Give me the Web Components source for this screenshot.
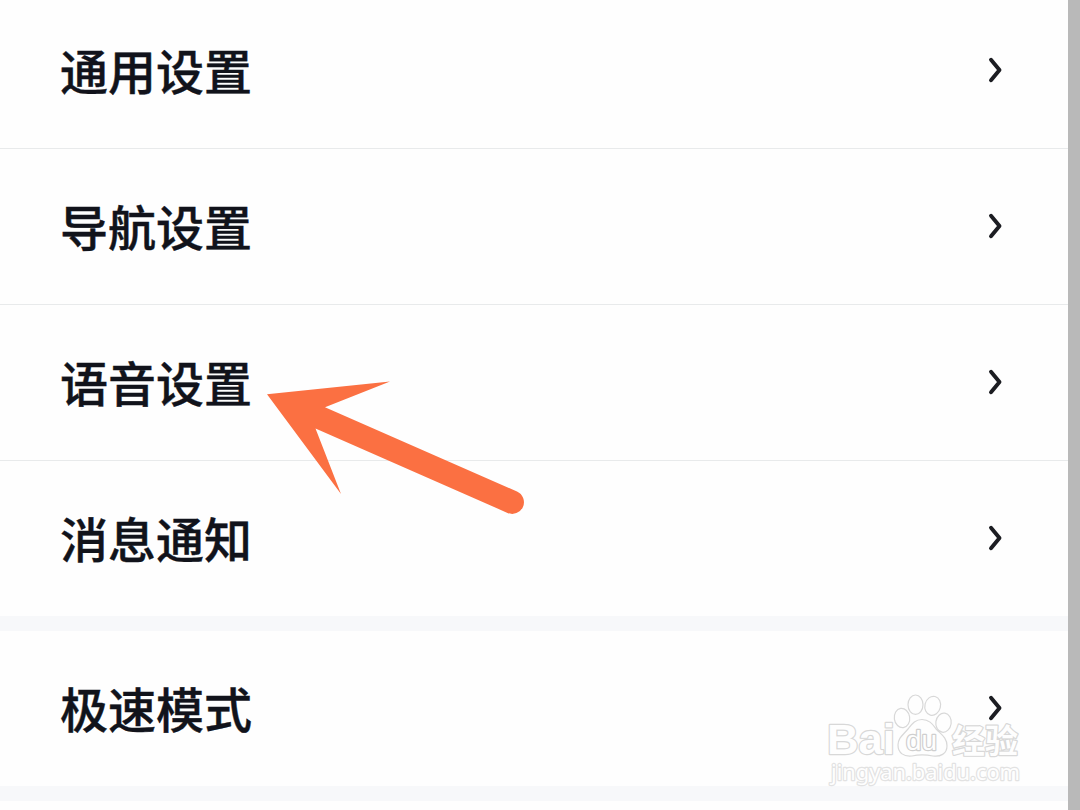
<!DOCTYPE html>
<html lang="zh-CN">
<head>
<meta charset="utf-8">
<title>设置</title>
<style>
  html, body {
    margin: 0;
    height: 100%;
    overflow: hidden;
    background: #fefefe;
  }
</style>
</head>
<body>
<settings-page>
  <settings-group>
    <settings-row>通用设置</settings-row>
    <settings-row>导航设置</settings-row>
    <settings-row>语音设置</settings-row>
    <settings-row>消息通知</settings-row>
  </settings-group>
  <settings-group>
    <settings-row>极速模式</settings-row>
  </settings-group>
  <pointer-arrow slot="overlay"></pointer-arrow>
  <site-watermark slot="overlay"></site-watermark>
</settings-page>

<script>
class SettingsPage extends HTMLElement {
  constructor() {
    super();
    this.attachShadow({ mode: "open" });
    this.render();
  }

  render() {
    this.shadowRoot.innerHTML = `
      <style>
      :host {
        position: relative;
        display: flex;
        width: 1080px;
        height: 810px;
        overflow: hidden;
        background: #fefefe;
        color: #11131b;
        font-family: "Noto Sans CJK SC", "Noto Sans", sans-serif;
      }
      main {
        flex: 1;
        min-width: 0;
        margin-top: -7px;
      }
      .edge {
        flex: none;
        width: 12px;
        background: #b9b9b9;
      }
      </style>
      <main><slot></slot></main>
      <div class="edge"></div>
      <slot name="overlay"></slot>
    `;
  }
}

class SettingsGroup extends HTMLElement {
  constructor() {
    super();
    this.attachShadow({ mode: "open" });
    this.render();
  }

  render() {
    this.shadowRoot.innerHTML = `
      <style>
      :host {
        display: block;
        border-bottom: 15px solid #f7f8fa;
      }
      ::slotted(settings-row:not(:last-child)) {
        border-bottom: 1px solid #e8eaeb;
      }
      </style>
      <slot></slot>
    `;
  }
}

class SettingsRow extends HTMLElement {
  constructor() {
    super();
    this.attachShadow({ mode: "open" });
    this.render();
  }

  render() {
    this.shadowRoot.innerHTML = `
      <style>
      :host {
        display: flex;
        align-items: center;
        justify-content: space-between;
        height: 155px;
        padding: 0 65px 0 60px;
        box-sizing: content-box;
      }
      .label {
        font-size: 48px;
        font-weight: 500;
        line-height: 70px;
        padding-bottom: 4px;
        -webkit-text-stroke: 0.4px currentColor;
      }
      svg {
        display: block;
        width: 16px;
        height: 28px;
        margin-bottom: 1px;
      }
      </style>
      <span class="label"><slot></slot></span>
      <svg viewBox="0 0 16 28" fill="none" stroke="#1c1d22" stroke-width="3.9" stroke-linecap="round" stroke-linejoin="round">
        <path d="M4 3.7 L12.5 14 L4 24.3"/>
      </svg>
    `;
  }
}

class PointerArrow extends HTMLElement {
  constructor() {
    super();
    this.attachShadow({ mode: "open" });
    this.render();
  }

  render() {
    this.shadowRoot.innerHTML = `
      <style>
      :host {
        position: absolute;
        left: 260px;
        top: 374px;
      }
      svg {
        display: block;
      }
      </style>
      <svg width="270" height="146" viewBox="260 374 270 146">
        <path fill="#fb7042" d="M267 394.3 L390 381.5 L325 407.3 L517 491.5 A11.6 11.6 0 0 1 507.5 512.9 L315.5 428.5 L341 494 Z"/>
      </svg>
    `;
  }
}

class SiteWatermark extends HTMLElement {
  constructor() {
    super();
    this.attachShadow({ mode: "open" });
    this.render();
  }

  render() {
    this.shadowRoot.innerHTML = `
      <style>
      :host {
        position: absolute;
        left: 820px;
        top: 686px;
      }
      svg {
        display: block;
      }
      text, .paw {
        fill: #fefefe;
        stroke: #d8d8d8;
        stroke-width: 1.2;
      }
      text {
        stroke-width: 2.4;
        paint-order: stroke;
        stroke-linejoin: round;
      }
      .latin {
        font-family: "Liberation Sans", Arial, sans-serif;
      }
      .du {
        stroke: #cfcfcf;
      }
      .url {
        font-family: "Noto Sans", sans-serif;
        stroke: #e2e2e2;
      }
      </style>
      <svg width="210" height="102" viewBox="820 686 210 102">
        <text class="latin" x="827" y="754" font-size="43" font-weight="700" textLength="68" lengthAdjust="spacingAndGlyphs">Bai</text>
        <g class="paw">
          <ellipse cx="902" cy="718" rx="7.7" ry="9.7" transform="rotate(-8 902 718)"/>
          <ellipse cx="915.5" cy="704.7" rx="7.5" ry="9.7"/>
          <ellipse cx="932.7" cy="705.8" rx="7.8" ry="9.6" transform="rotate(14 932.7 705.8)"/>
          <ellipse cx="943.5" cy="722.7" rx="7.7" ry="9.6" transform="rotate(8 943.5 722.7)"/>
          <path d="M922 719.5 C930 719.5 933 725 937 730 C942 735 947 738 947 746 C947 754 940 757 933 756 C925 754.5 919 754.5 912 756 C904 757 898 753 898 745 C898 738 903 735 908 729 C912 724 915 719.5 922 719.5 Z"/>
        </g>
        <text class="latin du" x="906" y="750" font-size="27" textLength="31" lengthAdjust="spacingAndGlyphs">du</text>
        <text x="952" y="752.5" font-size="33" font-weight="700" font-family="Noto Sans CJK SC, sans-serif">经验</text>
        <text class="url" x="831" y="780" font-size="22" textLength="189" lengthAdjust="spacingAndGlyphs">jingyan.baidu.com</text>
      </svg>
    `;
  }
}

customElements.define("settings-page", SettingsPage);
customElements.define("settings-group", SettingsGroup);
customElements.define("settings-row", SettingsRow);
customElements.define("pointer-arrow", PointerArrow);
customElements.define("site-watermark", SiteWatermark);
</script>
</body>
</html>
